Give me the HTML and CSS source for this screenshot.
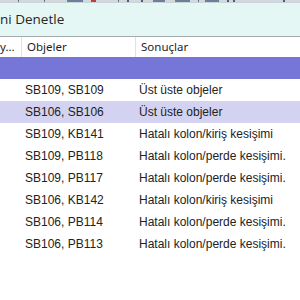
FILE: index.html
```html
<!DOCTYPE html>
<html>
<head>
<meta charset="utf-8">
<link rel="stylesheet" href="styles.css">
</head>
<body>
<div class="toolbar">
  <span class="tb-sep" style="margin-left:18px"></span>
  <span class="tb-sep" style="margin-left:25px"></span>
  <span class="tb-icon" style="margin-left:22px;width:16px"></span>
  <span class="tb-red" style="margin-left:8px"></span>
  <span class="tb-sep" style="margin-left:22px"></span>
  <span class="tb-dot" style="margin-left:8px"></span>
  <span class="tb-dot" style="margin-left:12px"></span>
  <span class="tb-icon" style="margin-left:10px;width:12px"></span>
  <span class="tb-icon" style="margin-left:10px;width:15px"></span>
  <span class="tb-sep" style="margin-left:8px"></span>
  <span class="tb-icon" style="margin-left:6px;width:14px"></span>
  <span class="tb-dot" style="margin-left:8px"></span>
  <span class="tb-dot" style="margin-left:4px"></span>
  <span class="tb-dot" style="margin-left:48px"></span>
</div>
<div class="title">ni Denetle</div>
<div class="grid">
  <div class="hcell first">y...</div>
  <div class="hcell">Objeler</div>
  <div class="hcell">Sonuçlar</div>

  <div class="row group"><div></div><div></div><div></div></div>

  <div class="row"><div></div><div>SB109, SB109</div><div>Üst üste objeler</div></div>
  <div class="row sel"><div></div><div>SB106, SB106</div><div>Üst üste objeler</div></div>
  <div class="row"><div></div><div>SB109, KB141</div><div>Hatalı kolon/kiriş kesişimi</div></div>
  <div class="row"><div></div><div>SB109, PB118</div><div>Hatalı kolon/perde kesişimi.</div></div>
  <div class="row"><div></div><div>SB109, PB117</div><div>Hatalı kolon/perde kesişimi.</div></div>
  <div class="row"><div></div><div>SB106, KB142</div><div>Hatalı kolon/kiriş kesişimi</div></div>
  <div class="row"><div></div><div>SB106, PB114</div><div>Hatalı kolon/perde kesişimi.</div></div>
  <div class="row"><div></div><div>SB106, PB113</div><div>Hatalı kolon/perde kesişimi.</div></div>
</div>
</body>
</html>
```
FILE: styles.css
```css
html, body {
  margin: 0;
  padding: 0;
  background: #ffffff;
  width: 300px;
  height: 300px;
  overflow: hidden;
}

.toolbar {
  height: 2px;
  background: #d4d8de;
  display: flex;
  align-items: stretch;
  border-bottom: 1px solid #c9d6d8;
}
.tb-sep { width: 1px; background: #6b6f76; }
.tb-dot { width: 2px; background: #4d5a7a; }
.tb-icon { background: #6d7d9a; }
.tb-red { width: 5px; background: #c83a3a; }

.title {
  height: 33px;
  background: #e4f7f5;
  border-bottom: 1px solid #a6abab;
  font-family: "Open Sans", "Noto Sans", sans-serif;
  font-size: 13.5px;
  color: #262626;
  line-height: 33px;
  padding-left: 0;
  white-space: nowrap;
}

.grid {
  display: grid;
  grid-template-columns: 21px 114px 1fr;
}

.hcell {
  height: 20px;
  line-height: 20px;
  background: #ffffff;
  font-family: "Noto Sans", "Open Sans", sans-serif;
  font-size: 11.5px;
  color: #1e1e1e;
  padding-left: 5px;
  border-left: 1px solid #e2e2e2;
  white-space: nowrap;
  overflow: hidden;
}
.hcell.first {
  border-left: none;
  padding-left: 0;
}

.row {
  display: contents;
}
.row > div {
  height: 22px;
  line-height: 22px;
  font-family: "Liberation Sans", Arial, sans-serif;
  font-size: 12px;
  color: #222222;
  padding-left: 4px;
  white-space: nowrap;
  overflow: hidden;
  background: #ffffff;
}
.row.group > div {
  background: #7676d9;
}
.row.sel > div {
  background: #d3d3f1;
}
```
